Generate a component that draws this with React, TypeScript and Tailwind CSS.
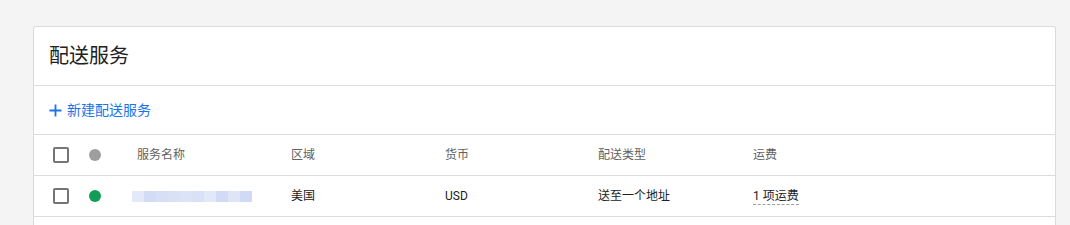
import React from "react";

const font = { fontFamily: 'Roboto, "Noto Sans CJK SC", "Noto Sans", sans-serif' };

const blurShades = [
  "#e3e9f8",
  "#d3dcf5",
  "#d6dff6",
  "#d8e1f6",
  "#dbe3f7",
  "#d9e1f6",
  "#e1e8f8",
  "#d2dbf5",
  "#dde5f7",
  "#d1daf4",
];

function Checkbox() {
  return <div className="w-4 h-4 border-2 border-[#757575] rounded-[2px] shrink-0" />;
}

export default function App() {
  return (
    <div className="w-[1070px] h-[225px] bg-[#f4f4f4] pt-[26px] pl-[33px] pr-[14px] overflow-hidden" style={font}>
      <div className="bg-white border border-[#dadada] rounded-t-[3px] border-b-0">
        <div className="h-[59px] flex items-center pl-[15px] border-b border-[#dcdcdc]">
          <span className="text-[20px] text-[#212121] leading-none">配送服务</span>
        </div>
        <div className="h-[49px] flex items-center pl-[14px] border-b border-[#dcdcdc]">
          <svg width="13" height="13" viewBox="0 0 13 13" className="shrink-0 ml-[1px]">
            <path d="M6.5 0.5v12M0.5 6.5h12" stroke="#1a73e8" strokeWidth="1.8" fill="none" />
          </svg>
          <span className="ml-[5px] text-[14px] text-[#1a73e8] leading-none">新建配送服务</span>
        </div>
        <div className="h-[41px] flex items-center pl-[19px] border-b border-[#dcdcdc] text-[12px] text-[#616161]">
          <Checkbox />
          <div className="ml-[20px] w-3 h-3 rounded-full bg-[#9e9e9e] shrink-0" />
          <div className="ml-[36px] w-[154px]">服务名称</div>
          <div className="w-[154px]">区域</div>
          <div className="w-[153px]">货币</div>
          <div className="w-[155px]">配送类型</div>
          <div>运费</div>
        </div>
        <div className="h-[41px] flex items-center pl-[19px] border-b border-[#dcdcdc] text-[12px] text-[#212121]">
          <Checkbox />
          <div className="ml-[20px] w-3 h-3 rounded-full bg-[#0f9d58] shrink-0" />
          <div className="ml-[31px] w-[159px] flex">
            {blurShades.map((c, i) => (
              <div key={i} className="w-3 h-[11px] mt-[1px]" style={{ backgroundColor: c }} />
            ))}
          </div>
          <div className="w-[154px]">美国</div>
          <div className="w-[153px]">USD</div>
          <div className="w-[155px]">送至一个地址</div>
          <div className="border-b border-dashed border-[#9e9e9e] leading-[16px]">1 项运费</div>
        </div>
        <div className="h-[30px]" />
      </div>
    </div>
  );
}
